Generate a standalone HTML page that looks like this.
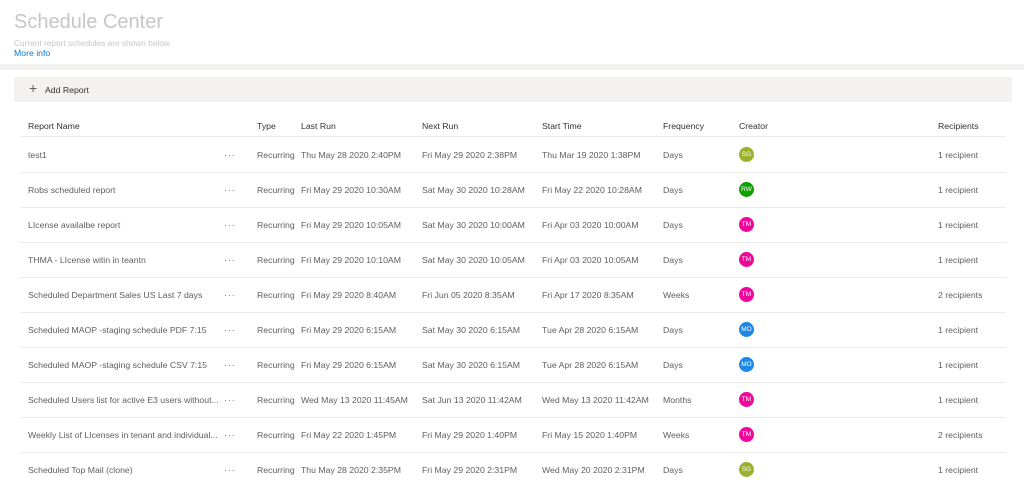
<!DOCTYPE html><html><head><style>
body{margin:0;width:1024px;height:485px;overflow:hidden;background:#f3f2f1;font-family:"Liberation Sans",sans-serif;color:#605e5c;position:relative}
.hdr{position:absolute;left:0;top:0;width:1024px;height:64px;background:#fff}
.main{position:absolute;left:0;top:70px;width:1024px;height:415px;background:#fff}
.t{position:absolute;white-space:nowrap}
.bar{position:absolute;left:14px;top:77px;width:998px;height:25px;background:#f3f2f1}
.line{position:absolute;left:20px;width:986px;height:1px;background:#edebe9}
.av{position:absolute;width:15px;height:15px;border-radius:50%;color:#fff;font-size:6.5px;text-align:center;line-height:15px}
.c{font-size:8.7px;color:#605e5c}
.h{font-size:8.7px;color:#323130}
</style></head><body>
<div class="hdr"></div><div class="main"></div>
<div class="t" style="left:14px;top:11px;font-size:20px;color:#c8c6c4">Schedule Center</div>
<div class="t" style="left:14px;top:38px;font-size:8.3px;color:#c8c6c4">Current report schedules are shown below</div>
<div class="t" style="left:14px;top:48px;font-size:8.7px;color:#0078d4">More info</div>
<div class="bar"></div>
<div class="t" style="left:29px;top:81px;font-size:14px;color:#605e5c;line-height:14px">+</div>
<div class="t h" style="left:45px;top:85px">Add Report</div>
<div class="t h" style="left:28px;top:121px">Report Name</div>
<div class="t h" style="left:257px;top:121px">Type</div>
<div class="t h" style="left:301px;top:121px">Last Run</div>
<div class="t h" style="left:422px;top:121px">Next Run</div>
<div class="t h" style="left:542px;top:121px">Start Time</div>
<div class="t h" style="left:663px;top:121px">Frequency</div>
<div class="t h" style="left:739px;top:121px">Creator</div>
<div class="t h" style="left:938px;top:121px">Recipients</div>
<div class="line" style="top:136px"></div>
<div id="rows"></div>
<script>
var d=[["test1","Thu May 28 2020 2:40PM","Fri May 29 2020 2:38PM","Thu Mar 19 2020 1:38PM","Days","SG","#9bb02d","1 recipient"],
["Robs scheduled report","Fri May 29 2020 10:30AM","Sat May 30 2020 10:28AM","Fri May 22 2020 10:28AM","Days","RW","#0ea000","1 recipient"],
["LIcense availalbe report","Fri May 29 2020 10:05AM","Sat May 30 2020 10:00AM","Fri Apr 03 2020 10:00AM","Days","TM","#f0069b","1 recipient"],
["THMA - LIcense witin in teantn","Fri May 29 2020 10:10AM","Sat May 30 2020 10:05AM","Fri Apr 03 2020 10:05AM","Days","TM","#f0069b","1 recipient"],
["Scheduled Department Sales US Last 7 days","Fri May 29 2020 8:40AM","Fri Jun 05 2020 8:35AM","Fri Apr 17 2020 8:35AM","Weeks","TM","#f0069b","2 recipients"],
["Scheduled MAOP -staging schedule PDF 7:15","Fri May 29 2020 6:15AM","Sat May 30 2020 6:15AM","Tue Apr 28 2020 6:15AM","Days","MO","#1f87e5","1 recipient"],
["Scheduled MAOP -staging schedule CSV 7:15","Fri May 29 2020 6:15AM","Sat May 30 2020 6:15AM","Tue Apr 28 2020 6:15AM","Days","MO","#1f87e5","1 recipient"],
["Scheduled Users list for active E3 users without...","Wed May 13 2020 11:45AM","Sat Jun 13 2020 11:42AM","Wed May 13 2020 11:42AM","Months","TM","#f0069b","1 recipient"],
["Weekly List of LIcenses in tenant and individual...","Fri May 22 2020 1:45PM","Fri May 29 2020 1:40PM","Fri May 15 2020 1:40PM","Weeks","TM","#f0069b","2 recipients"],
["Scheduled Top Mail (clone)","Thu May 28 2020 2:35PM","Fri May 29 2020 2:31PM","Wed May 20 2020 2:31PM","Days","SG","#9bb02d","1 recipient"]];
var h="";d.forEach(function(r,i){var y=155+i*35,ty=y-5;
h+='<div class="t c" style="left:28px;top:'+ty+'px">'+r[0]+'</div><div class="t c" style="left:224px;top:'+ty+'px;letter-spacing:1px">···</div><div class="t c" style="left:257px;top:'+ty+'px">Recurring</div><div class="t c" style="left:301px;top:'+ty+'px">'+r[1]+'</div><div class="t c" style="left:422px;top:'+ty+'px">'+r[2]+'</div><div class="t c" style="left:542px;top:'+ty+'px">'+r[3]+'</div><div class="t c" style="left:663px;top:'+ty+'px">'+r[4]+'</div><div class="av" style="left:739px;top:'+(y-8)+'px;background:'+r[6]+'">'+r[5]+'</div><div class="t c" style="left:938px;top:'+ty+'px">'+r[7]+'</div>';
if(i<9)h+='<div class="line" style="top:'+(y+17)+'px"></div>';});
document.getElementById("rows").innerHTML=h;
</script>
</body></html>
